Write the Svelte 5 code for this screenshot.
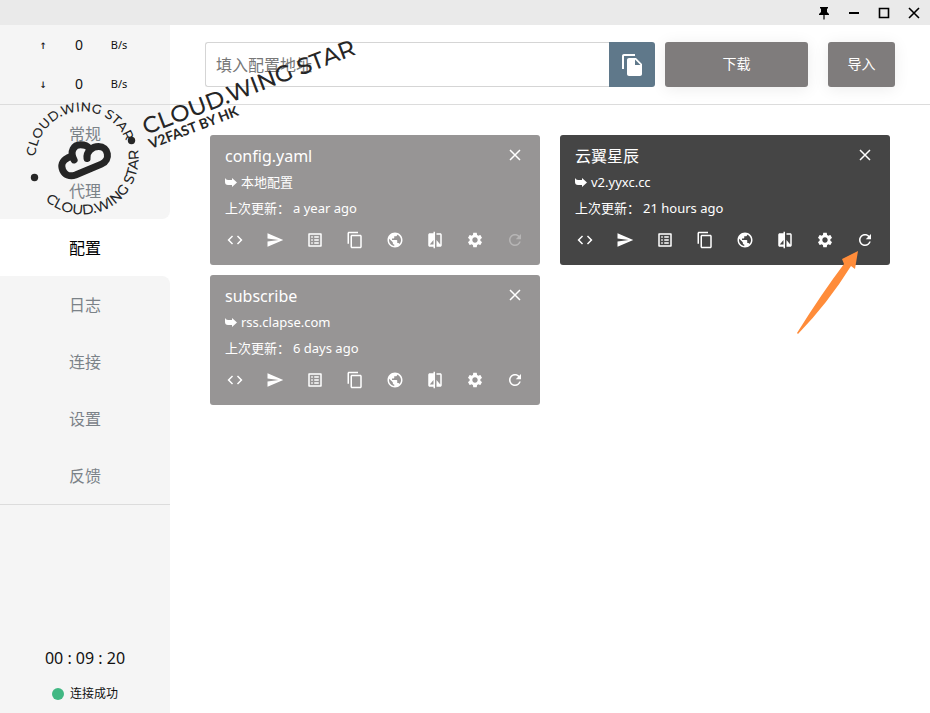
<script>
  const nav = ['常规', '代理', '配置', '日志', '连接', '设置', '反馈'];
  const active = '配置';

  const cards = [
    { name: 'config.yaml', source: '本地配置', updated: 'a year ago', selected: false, local: true },
    { name: '云翼星辰', source: 'v2.yyxc.cc', updated: '21 hours ago', selected: true, local: false },
    { name: 'subscribe', source: 'rss.clapse.com', updated: '6 days ago', selected: false, local: false }
  ];

  const actions = [
    { label: '编辑代码', d: 'M9.4 16.6 4.8 12l4.6-4.6L8 6l-6 6 6 6zm5.2 0L19.200 12l-4.600-4.600L16 6l6 6-6 6z' },
    { label: '发送', d: 'M2.010 21 23 12 2.010 3 2 10l15 2-15 2z' },
    { label: '规则', d: 'M19 5v14H5V5zm1.100-2H3.900c-.5 0-.9.4-.9.900v16.200c0 .4.4.900.9.900h16.200c.4 0 .9-.5.9-.9V3.900c0-.5-.5-.9-.9-.9M11 7h6v2h-6zm0 4h6v2h-6zm0 4h6v2h-6zM7 7h2v2H7zm0 4h2v2H7zm0 4h2v2H7z' },
    { label: '复制', d: 'M16 1H4c-1.100 0-2 .9-2 2v14h2V3h12zm3 4H8c-1.100 0-2 .9-2 2v14c0 1.100.9 2 2 2h11c1.100 0 2-.9 2-2V7c0-1.100-.9-2-2-2m0 16H8V7h11z' },
    { label: '网址', d: 'M12 2C6.480 2 2 6.480 2 12s4.480 10 10 10 10-4.480 10-10S17.520 2 12 2m-1 17.930c-3.950-.49-7-3.850-7-7.930 0-.62.08-1.210.21-1.790L9 15v1c0 1.100.9 2 2 2zm6.900-2.540c-.26-.81-1-1.390-1.900-1.390h-1v-3c0-.55-.45-1-1-1H8v-2h2c.55 0 1-.45 1-1V7h2c1.100 0 2-.9 2-2v-.41c2.930 1.190 5 4.060 5 7.410 0 2.080-.8 3.970-2.100 5.390' },
    { label: '对比', d: 'M10 3H5c-1.100 0-2 .9-2 2v14c0 1.100.9 2 2 2h5v2h2V1h-2zm0 15H5l5-6zm9-15h-5v2h5v13l-5-6v9h5c1.100 0 2-.9 2-2V5c0-1.100-.9-2-2-2' },
    { label: '设置', d: 'M19.140 12.940c.04-.3.06-.61.06-.94 0-.32-.02-.64-.07-.94l2.030-1.580c.18-.14.23-.41.12-.61l-1.920-3.320c-.12-.22-.37-.29-.59-.22l-2.390.96c-.5-.38-1.030-.7-1.620-.94l-.36-2.540c-.04-.24-.24-.41-.48-.41h-3.840c-.24 0-.43.17-.47.41l-.36 2.540c-.59.24-1.130.57-1.620.94l-2.390-.96c-.22-.08-.47 0-.59.22L2.740 8.870c-.12.21-.08.47.12.61l2.030 1.580c-.05.3-.09.63-.09.94s.02.64.07.94l-2.030 1.580c-.18.14-.23.41-.12.61l1.920 3.320c.12.22.37.29.59.22l2.390-.96c.5.38 1.030.7 1.620.94l.36 2.540c.05.24.24.41.48.41h3.840c.24 0 .44-.17.47-.41l.36-2.540c.59-.24 1.130-.56 1.620-.94l2.390.96c.22.08.47 0 .59-.22l1.920-3.320c.12-.22.07-.47-.12-.61zM12 15.600c-1.980 0-3.600-1.620-3.600-3.600s1.620-3.600 3.600-3.600 3.600 1.620 3.600 3.600-1.620 3.600-3.600 3.600' },
    { label: '更新', d: 'M17.650 6.350C16.200 4.900 14.210 4 12 4c-4.420 0-7.990 3.580-7.990 8s3.570 8 7.990 8c3.730 0 6.840-2.550 7.730-6h-2.080c-.82 2.330-3.040 4-5.650 4-3.310 0-6-2.690-6-6s2.690-6 6-6c1.660 0 3.140.69 4.220 1.780L13 11h7V4z' }
  ];
</script>

<div class="app">
  <header class="titlebar">
    <button aria-label="置顶"><svg width="14" height="14" viewBox="0 0 14 14"><path d="M3 1h8v1.500H10V6l2 2v1H7.600v4L7 14l-.6-1V9H2V8l2-2V2.500H3z" /></svg></button>
    <button aria-label="最小化"><svg width="14" height="14" viewBox="0 0 14 14"><path d="M2 6h10v2H2z" /></svg></button>
    <button aria-label="最大化"><svg width="14" height="14" viewBox="0 0 14 14"><path d="M2.500 2.500h9v9h-9z" class="line" /></svg></button>
    <button aria-label="关闭"><svg width="14" height="14" viewBox="0 0 14 14"><path d="m2 2 10 10M12 2 2 12" class="line" /></svg></button>
  </header>

  <div class="body">
    <aside>
      <div class="traffic">
        <div><i>↑</i><b>0</b><span>B/s</span></div>
        <div><i>↓</i><b>0</b><span>B/s</span></div>
      </div>
      <nav>
        {#each nav as item}
          <a href="#{item}" class:active={item === active}>{item}</a>
        {/each}
      </nav>
      <footer>
        <div class="timer">00 : 09 : 20</div>
        <div class="status"><span class="dot"></span>连接成功</div>
      </footer>
    </aside>

    <main>
      <form class="toolbar">
        <input type="text" aria-label="填入配置地址" placeholder="填入配置地址" />
        <button type="button" class="paste" aria-label="粘贴">
          <svg width="24" height="24" viewBox="0 0 24 24"><path d="M15 1H4c-1.100 0-2 .9-2 2v13h2V3h11zm1 4H9c-1.100 0-2 .9-2 2v14c0 1.100.9 2 2 2h11c1.100 0 2-.9 2-2V11zm-1 7V6.500l5.500 5.500z" /></svg>
        </button>
        <button type="button" class="solid download">下载</button>
        <button type="button" class="solid import">导入</button>
      </form>

      <section class="cards">
        {#each cards as card}
          <article class:selected={card.selected}>
            <h2>{card.name}</h2>
            <p class="source">
              <svg width="12" height="9" viewBox="0 0 12 9"><path d="M0 0Q1 2 3 2h4V0l5 4.500L7 9V7H3Q0 7 0 4z" /></svg>{card.source}
            </p>
            <p class="updated"><span>上次更新：</span><span>{card.updated}</span></p>
            <div class="actions">
              {#each actions as action}
                <button aria-label={action.label} disabled={card.local && action.label === '更新'}>
                  <svg width="18" height="18" viewBox="0 0 24 24"><path d={action.d} /></svg>
                </button>
              {/each}
            </div>
            <button class="remove" aria-label="删除">
              <svg width="12" height="12" viewBox="0 0 12 12"><path d="m1 1 10 10M11 1 1 11" /></svg>
            </button>
          </article>
        {/each}
      </section>
    </main>
  </div>

  <svg class="stamp" width="380" height="220" viewBox="10 20 380 220" aria-hidden="true">
    <defs>
      <path id="ring-top" d="M35.500 158.500a47 47 0 0 1 94 0a47 47 0 0 1-94 0" />
      <path id="ring-bottom" d="M26.500 158.500a56 56 0 0 0 112 0a56 56 0 0 0-112 0" />
    </defs>
    <text class="ring"><textPath href="#ring-top" startOffset="2">CLOUD.WING STAR</textPath></text>
    <text class="ring lower"><textPath href="#ring-bottom" startOffset="47">CLOUD.WING STAR</textPath></text>
    <circle cx="34.500" cy="177.500" r="3.700" />
    <circle cx="131.500" cy="140.500" r="3.700" />
    <g class="cloud" transform="translate(51 134) scale(0.3500)">
      <path d="M66 74C52 50 66 31 84 31C98 31 105 35 110 42" />
      <path d="M103 70C100 50 118 36 136 36C164 36 172 74 144 86L70 117C36 130 14 84 48 68L58 64" />
    </g>
    <text class="brand" transform="translate(146 135) rotate(-21)">CLOUD.WING STAR</text>
    <text class="tagline" transform="translate(151 149) rotate(-21)">V2FAST BY HK</text>
  </svg>

  <svg class="pointer" width="66" height="86" viewBox="0 0 66 86" aria-hidden="true">
    <path d="M1 83Q26 43 48 14L46 9 62 1 59 19 55 16Q32 53 2 84z" />
  </svg>
</div>

<style>
  :global(body) { margin: 0; background: #fff; }
  .app {
    position: relative;
    display: flex;
    flex-direction: column;
    min-height: 100vh;
    font-family: "Noto Sans", "Noto Sans CJK SC", sans-serif;
    color: #111;
  }
  button { padding: 0; border: 0; background: none; font: inherit; color: inherit; cursor: pointer; }
  svg { display: block; fill: currentColor; }
  .titlebar { display: flex; justify-content: flex-end; align-items: center; gap: 16px; height: 25px; padding-right: 9px; background: #eaeaea; color: #000; }
  .line { fill: none; stroke: currentColor; stroke-width: 1.600; }
  .body { flex: 1; display: flex; }
  aside { width: 170px; flex: none; display: flex; flex-direction: column; background: #f5f5f5; }
  .traffic { padding-bottom: 1px; border-bottom: 1px solid #dcdcdc; }
  .traffic div { height: 39px; display: grid; grid-template-columns: 36px 36px 44px; padding-left: 25px; align-items: center; text-align: center; line-height: 20px; }
  .traffic i { font: 12px "DejaVu Sans Mono", monospace; }
  .traffic b { font-weight: 400; font-size: 14px; }
  .traffic span { font-size: 11px; }
  nav { display: flex; flex-direction: column; border-bottom: 1px solid #dcdcdc; background: linear-gradient(#fff, #fff) right / 10px 100% no-repeat; }
  nav a { padding-top: 2px; line-height: 55px; text-align: center; font-size: 16px; color: #7b8288; text-decoration: none; background: #f5f5f5; }
  nav a.active { background: #fff; color: #000; }
  nav a:has(+ .active) { border-bottom-right-radius: 8px; }
  nav .active + a { border-top-right-radius: 8px; }
  footer { margin-top: auto; padding-bottom: 9px; text-align: center; }
  .timer { font-size: 16px; line-height: 24px; margin-bottom: 14px; }
  .status { display: flex; align-items: center; justify-content: center; gap: 6px; font-size: 12px; line-height: 20px; }
  .dot { width: 12px; height: 12px; border-radius: 50%; background: #41b883; }

  main { flex: 1; min-width: 0; }
  .toolbar { display: flex; padding: 17px 35px; border-bottom: 1px solid #dcdcdc; }
  .toolbar input { flex: 1; min-width: 0; height: 45px; box-sizing: border-box; border: 1px solid #d5d5d5; border-right: 0; border-radius: 3px 0 0 3px; padding: 0 10px; font: inherit; font-size: 16px; background: #fff; }
  .toolbar input::placeholder { color: #777; opacity: 1; }
  .toolbar button { height: 45px; color: #fff; }
  .paste { width: 46px; display: grid; place-items: center; background: #5f788a; border-radius: 0 3px 3px 0; }
  .solid { padding-bottom: 3px; background: #7f7c7c; border-radius: 3px; font-size: 14px; box-shadow: 0 2px 16px rgba(0, 0, 0, 0.08); }
  .download { width: 143px; margin-left: 10px; }
  .import { width: 67px; margin-left: 20px; }

  .cards { display: grid; grid-template-columns: 1fr 1fr; gap: 10px 20px; padding: 30px 40px; }
  article { position: relative; padding: 9px 15px 10px; background: #979595; color: #fff; border-radius: 3px; }
  article.selected { background: #454545; }
  h2 { margin: 0; font-size: 16px; font-weight: 400; line-height: 25px; }
  p { margin: 0; font-size: 13px; line-height: 26px; display: flex; align-items: center; }
  .source { gap: 4px; }
  .updated span:last-child { margin-left: 3px; }
  .actions { display: flex; justify-content: space-between; margin: 0 -5px; padding-top: 4px; }
  .actions button { width: 30px; height: 30px; display: grid; place-items: center; }
  .actions button:disabled { opacity: 0.3; }
  .remove { position: absolute; top: 10px; right: 15px; width: 20px; height: 20px; display: grid; place-items: center; }
  .remove path { fill: none; stroke: currentColor; stroke-width: 1.500; }

  .stamp, .pointer { position: absolute; pointer-events: none; }
  .stamp { left: 10px; top: 20px; fill: #262626; font-family: Montserrat, Lato, sans-serif; }
  .ring { font-size: 13px; font-weight: 500; }
  .lower { font-size: 14px; }
  .brand { font-size: 23px; font-weight: 500; }
  .tagline { font-family: Lato, sans-serif; font-size: 14px; font-weight: 700; }
  .cloud { fill: none; stroke: #262626; stroke-width: 20; stroke-linejoin: round; stroke-linecap: round; }
  .pointer { left: 796px; top: 250px; fill: #ff8c3a; }
</style>
